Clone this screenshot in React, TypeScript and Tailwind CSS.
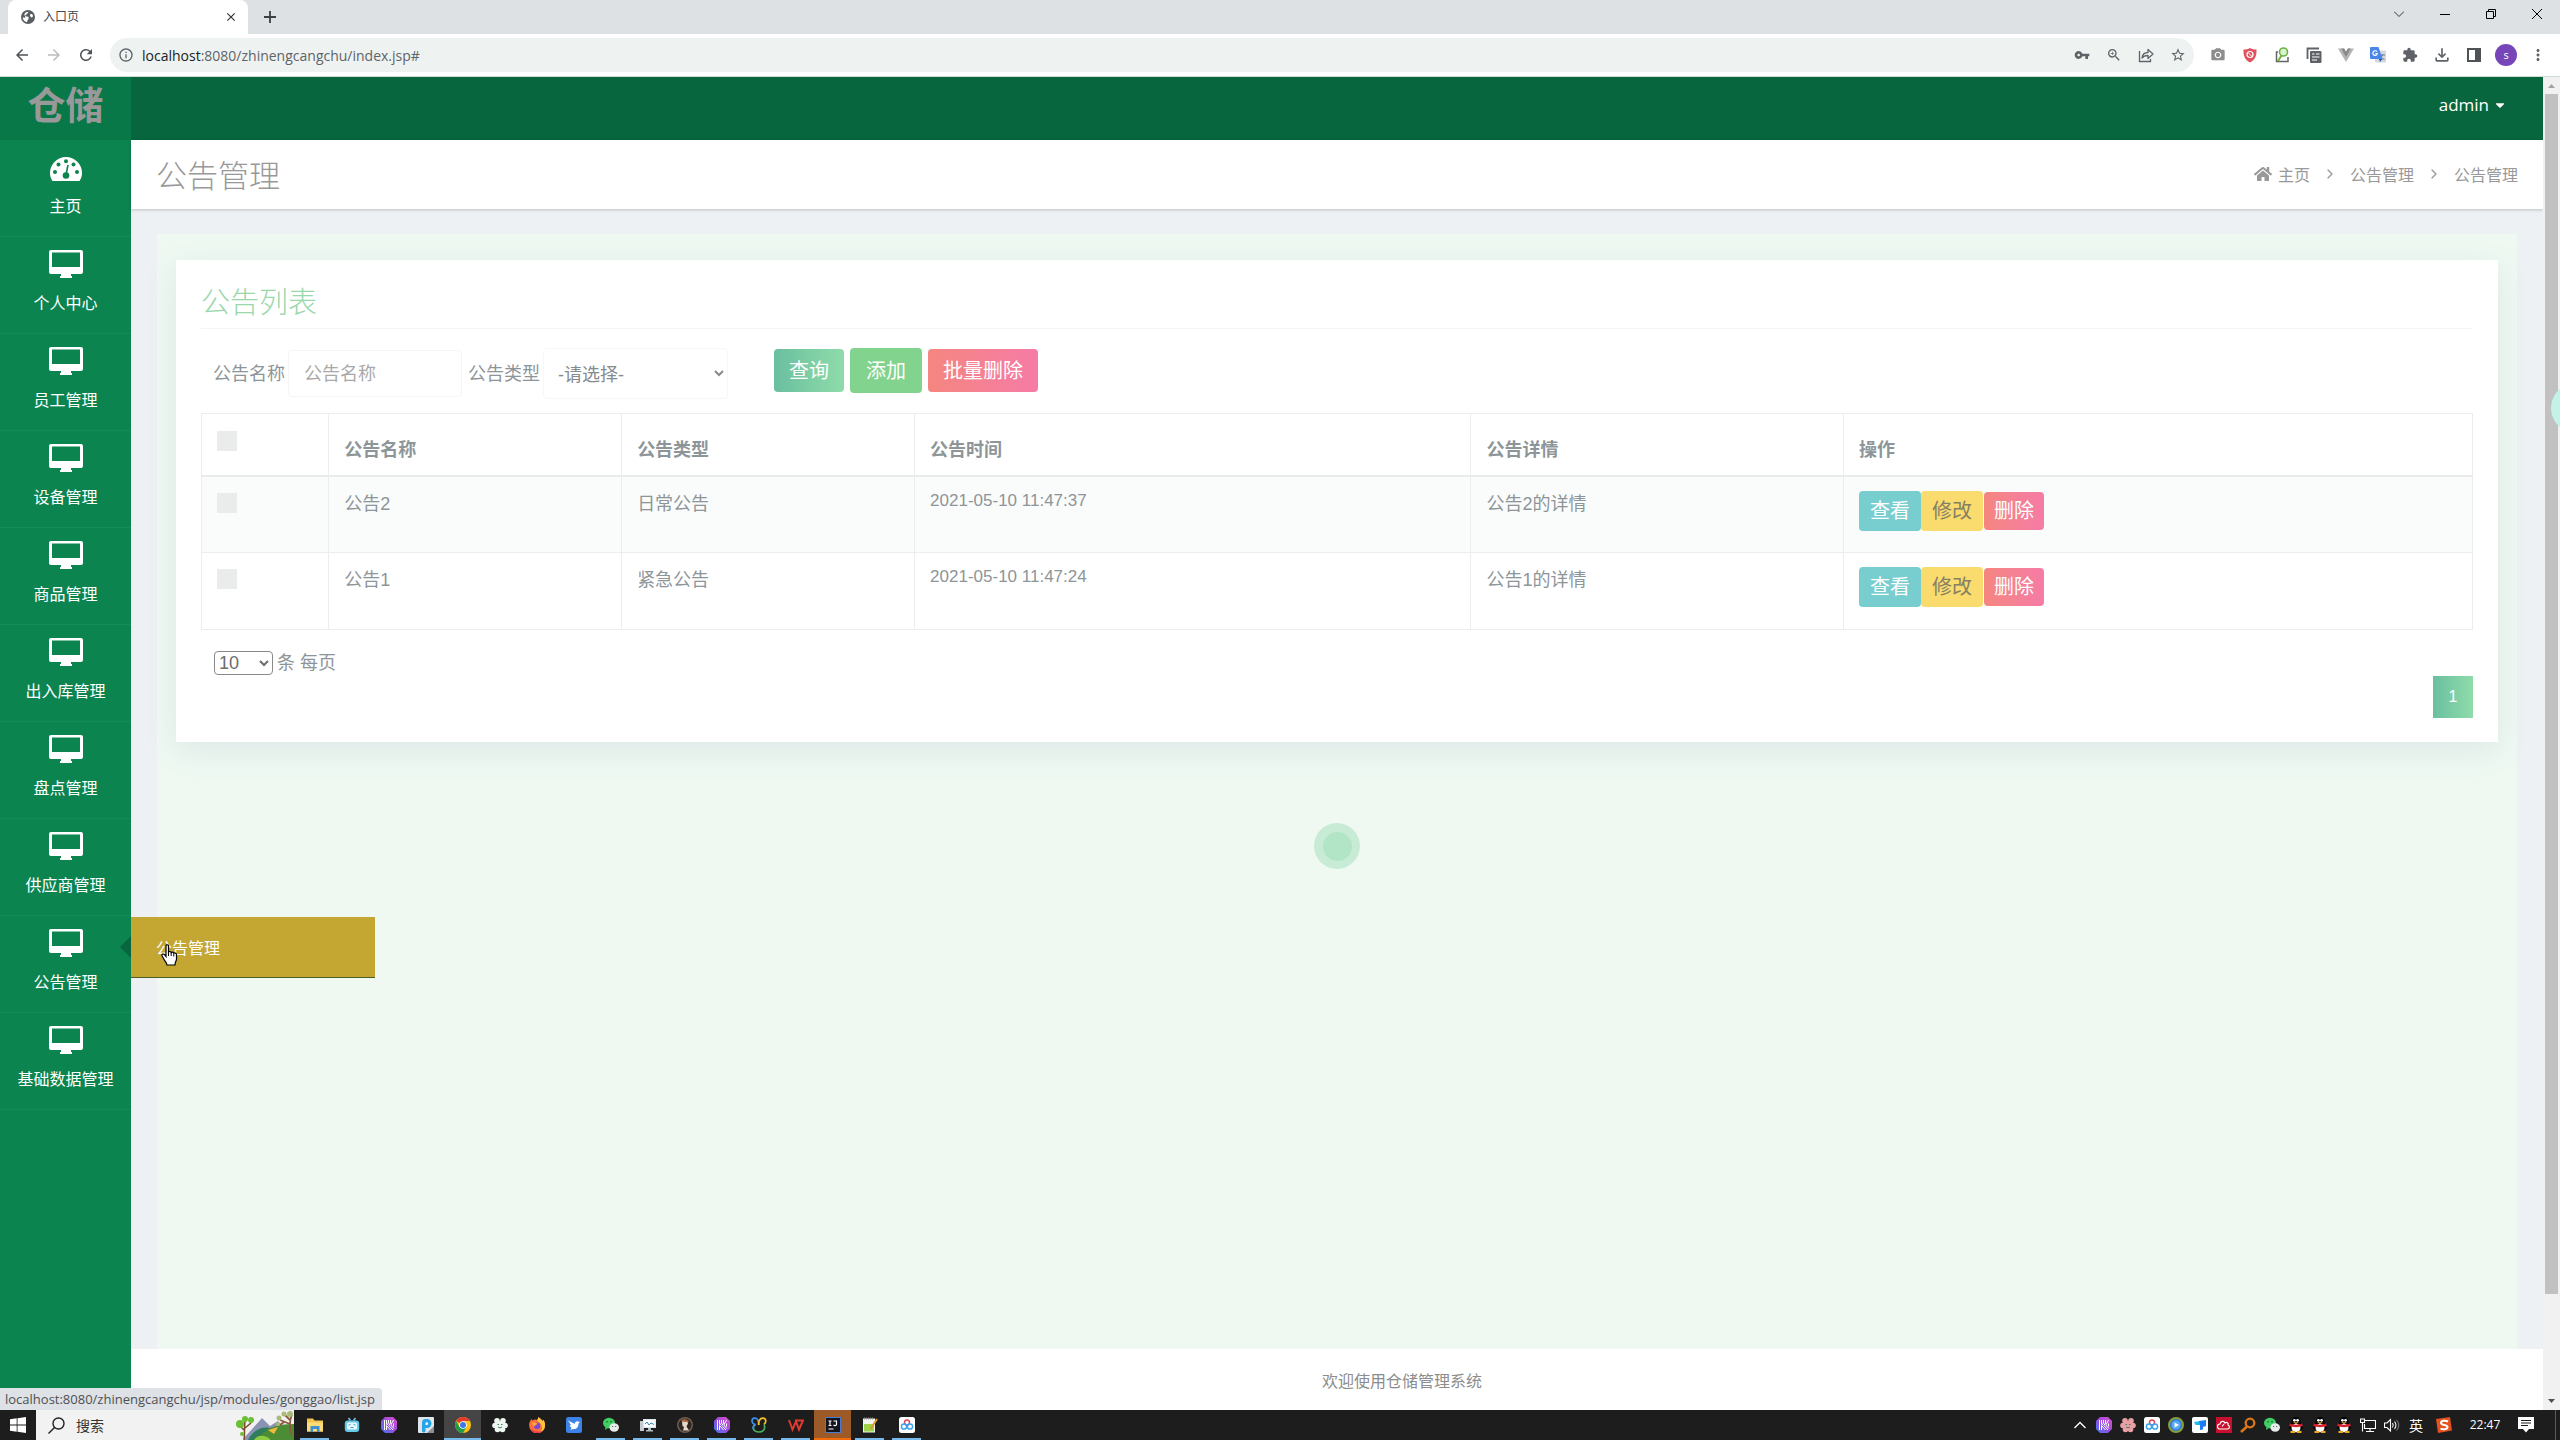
import type { ReactNode } from 'react'
import {
  MdArrowBack,
  MdArrowForward,
  MdCameraAlt,
  MdClose,
  MdExtension,
  MdInfoOutline,
  MdMoreVert,
  MdOutlineFileDownload,
  MdRefresh,
  MdStarBorder,
  MdVpnKey,
  MdZoomIn,
} from 'react-icons/md'
import { FaCaretDown, FaHome } from 'react-icons/fa'
import { ChevronRight } from 'lucide-react'

interface Notice {
  id: number
  name: string
  type: string
  time: string
  detail: string
}

const menuItems = [
  '个人中心',
  '员工管理',
  '设备管理',
  '商品管理',
  '出入库管理',
  '盘点管理',
  '供应商管理',
  '公告管理',
  '基础数据管理',
]

const notices: Notice[] = [
  { id: 2, name: '公告2', type: '日常公告', time: '2021-05-10 11:47:37', detail: '公告2的详情' },
  { id: 1, name: '公告1', type: '紧急公告', time: '2021-05-10 11:47:24', detail: '公告1的详情' },
]

/* ---------- icons ---------- */

function MonitorIcon() {
  return (
    <svg viewBox="0 0 34 28" className="w-[34px] h-7" fill="currentColor">
      <path
        fillRule="evenodd"
        d="M2 0h30a2 2 0 0 1 2 2v20a2 2 0 0 1-2 2H22v2h1v2H11v-2h1v-2H2a2 2 0 0 1-2-2V2a2 2 0 0 1 2-2zm1 2.500v14.500h28V2.500z"
      />
    </svg>
  )
}

function DashboardIcon() {
  return (
    <svg viewBox="0 0 32 24" className="w-8 h-6">
      <path d="M2.500 24C.8 21.500 0 19 0 16a16 16 0 0 1 32 0c0 3-.8 5.500-2.500 8z" fill="#fff" />
      <g fill="#0b8450">
        <circle cx="5" cy="15" r="2" />
        <circle cx="8.500" cy="7.500" r="2" />
        <circle cx="16" cy="4.300" r="2" />
        <circle cx="23.500" cy="7.500" r="2" />
        <circle cx="27" cy="15" r="2" />
        <circle cx="16" cy="18.500" r="3.300" />
      </g>
      <path d="M16 18l2-10" stroke="#0b8450" strokeWidth="1.600" />
    </svg>
  )
}

function GlobeIcon() {
  return (
    <svg viewBox="0 0 16 16" className="w-3.5 h-3.5">
      <circle cx="8" cy="8" r="8" fill="#5a5e62" />
      <path d="M9 2c-2 1-1 2.500-3 3S5 7.500 7 7.500s2.500 2 1 3.500-.5 2-1 3C3.500 13.500 2 11 2 8c2 1.500 3 1 3 0S3.500 6 4 4.500 7 2 9 2zM10.500 5c1-.5 2.500-.5 3 1s-.5 3-1.500 2.500-2.500-3-1.500-3.500z" fill="#fff" />
    </svg>
  )
}

function ShareIcon() {
  return (
    <svg viewBox="0 0 16 16" className="w-4 h-4" fill="none" stroke="#5f6368" strokeWidth="1.300">
      <path d="M1.500 4v10.500h11V12" />
      <path d="M4 11c.5-4 3-5.500 6-5.500V2.500L15 7l-5 4.500v-3C7.500 8.500 5.500 9 4 11z" strokeLinejoin="round" />
    </svg>
  )
}

function ShieldIcon() {
  return (
    <svg viewBox="0 0 16 16" className="w-4 h-4">
      <path d="M8 1c2 1 4 1.500 6.500 1.500C14.800 9 13 13 8 15.500 3 13 1.200 9 1.500 2.500 4 2.500 6 2 8 1z" fill="#e0525f" />
      <circle cx="8" cy="7.500" r="3" fill="none" stroke="#fff" strokeWidth="1.200" />
      <path d="M6 5.500l4 4" stroke="#fff" />
    </svg>
  )
}

function BookSearchIcon() {
  return (
    <svg viewBox="0 0 16 16" className="w-4 h-4" fill="none">
      <path d="M4 5H2.500v9.500H14V10" stroke="#666" strokeWidth="1.500" />
      <circle cx="9.500" cy="5" r="4" fill="#d8f5d0" stroke="#6cb33f" strokeWidth="1.600" />
      <path d="M7.500 8.500L4 14" stroke="#6cb33f" strokeWidth="2" />
    </svg>
  )
}

function CopyPageIcon() {
  return (
    <svg viewBox="0 0 16 16" className="w-4 h-4" fill="none">
      <path d="M1.500 12V1.500H13" stroke="#5f6368" strokeWidth="1.800" />
      <rect x="4" y="4" width="11.500" height="12" rx="1" fill="#5f6368" />
      <path d="M6 7h2.500M6 10h7.500M6 13h5M10 7h3.500" stroke="#fff" strokeWidth="1.200" />
    </svg>
  )
}

function VueIcon() {
  return (
    <svg viewBox="0 0 16 16" className="w-4 h-4">
      <path d="M0 1.500h6L8 5l2-3.500h6L8 15z" fill="#b5b5b5" />
      <path d="M3.200 1.500h3L8 4.800l1.800-3.300h3L8 10z" fill="#8a8a8a" />
    </svg>
  )
}

function TranslateIcon() {
  return (
    <svg viewBox="0 0 16 16" className="w-4 h-4">
      <rect x="5" y="3.500" width="11" height="12" rx="1" fill="#d5d8dc" />
      <path d="M9.500 8h5.500M12.200 7v1c-.4 2-1.400 3.500-3 4.500M10.500 9c.8 1.700 2 2.800 4 3.500" stroke="#5f7f95" fill="none" />
      <path d="M1 0h7.500l4 12H1a1 1 0 0 1-1-1V1a1 1 0 0 1 1-1z" fill="#4a86e8" />
      <path d="M7 4.700A2.300 2.300 0 1 0 7.400 6.500H5.300" stroke="#fff" strokeWidth="1.200" fill="none" />
      <path d="M9 12h3.500L10 15z" fill="#2a56b8" />
    </svg>
  )
}

function CursorHand() {
  return (
    <svg viewBox="0 0 17 22" className="w-[17px] h-[22px]">
      <path
        d="M5 1.500c0-1 2.500-1 2.500 0V8c.5-.8 2.500-.6 2.700.5.600-.7 2.300-.5 2.500.700.700-.5 2.800-.2 2.800 1.300v4.500c0 2-1.500 3-1.500 6H6c0-2-2.500-4-3.500-6.500L1 11.500c-.5-1.500 1.500-2 2.500-.8L5 12.500z"
        fill="#fff"
        stroke="#000"
        strokeWidth="1.200"
      />
      <path d="M7.500 8v4M10.200 9v3M12.800 10v2.500" stroke="#000" />
    </svg>
  )
}

function WindowsIcon() {
  return (
    <svg viewBox="0 0 16 16" className="w-4 h-4" fill="#fff">
      <path d="M0 2.200l6.700-.9v6.300H0zM7.500 1.200L16 0v7.600H7.500zM0 8.400h6.700v6.300L0 13.800zM7.500 8.400H16V16l-8.500-1.200z" />
    </svg>
  )
}

function FolderIcon() {
  return (
    <svg viewBox="0 0 16 16" className="w-4 h-4">
      <path d="M0 1.500h6l1.500 2H16v11H0z" fill="#f4c64e" />
      <path d="M0 5.500h16v9H0z" fill="#fbdc79" />
      <path d="M3.500 9h9v6H10v-3H6v3H3.500z" fill="#3f8fd4" />
    </svg>
  )
}

function BiliIcon() {
  return (
    <svg viewBox="0 0 16 16" className="w-4 h-4">
      <path d="M4.500 1l2 2.500M11.500 1l-2 2.500" stroke="#68c8e8" strokeWidth="1.600" />
      <rect x="0.800" y="3.500" width="14.400" height="11.500" rx="3" fill="#68c8e8" />
      <rect x="3" y="5.500" width="10" height="7" rx="1.500" fill="#e6f9ff" />
      <path d="M4.500 8l2-.6M11.500 8l-2-.6M6.500 10.500h3" stroke="#3ba7cc" />
    </svg>
  )
}

function MazeIcon() {
  return (
    <svg viewBox="0 0 16 16" className="w-4 h-4">
      <defs>
        <linearGradient id="maze" x1="0" y1="1" x2="1" y2="0">
          <stop offset="0" stopColor="#3f7df0" />
          <stop offset=".5" stopColor="#9b4be0" />
          <stop offset="1" stopColor="#e052c8" />
        </linearGradient>
      </defs>
      <path d="M4 0h8l4 4v8l-4 4H4l-4-4V4z" fill="url(#maze)" />
      <path d="M3.500 3v10M5.500 3v4.500M5.500 9v4M7.500 3v3L5.500 8.500l4 4.500M9.500 3v3L7.800 8.500 12 13M12.500 3L9.800 8l3 3.500M12.500 6.500v3" stroke="#fff" fill="none" />
    </svg>
  )
}

function PixPinIcon() {
  return (
    <svg viewBox="0 0 16 16" className="w-4 h-4">
      <rect width="16" height="16" rx="1" fill="#dfe5ea" />
      <path d="M4 14V5.500A3.500 3.500 0 0 1 7.500 2H9a4 4 0 0 1 0 9H7.500v2.500A1.500 1.500 0 0 1 4 14z" fill="#28a5e8" />
      <path d="M7.500 8V6.500a1.300 1.300 0 1 1 1.500 1.400z" fill="#fff" />
      <path d="M16 9v7H9z" fill="#8b8f96" />
    </svg>
  )
}

function ChromeIcon() {
  return (
    <svg viewBox="0 0 16 16" className="w-4 h-4">
      <circle cx="8" cy="8" r="8" fill="#fbc116" />
      <path d="M8 8L1.100 4A8 8 0 0 1 14.900 4H8z" fill="#e33b2e" />
      <path d="M1.100 4A8 8 0 0 0 8 16l3.500-6L8 8 4.500 10z" fill="#229a4d" />
      <circle cx="8" cy="8" r="3.800" fill="#fff" />
      <circle cx="8" cy="8" r="3" fill="#3b78e7" />
    </svg>
  )
}

function FlowerIcon({ color }: { color: string }) {
  return (
    <svg viewBox="0 0 16 16" className="w-4 h-4" fill={color}>
      <circle cx="5" cy="3.800" r="2.800" />
      <circle cx="11" cy="3.800" r="2.800" />
      <circle cx="3" cy="8.500" r="2.800" />
      <circle cx="13" cy="8.500" r="2.800" />
      <circle cx="5.500" cy="12.500" r="2.800" />
      <circle cx="10.500" cy="12.500" r="2.800" />
      <circle cx="8" cy="8" r="4" />
      <path d="M5.500 7.500h1.500M9 7.500h1.500M6 10c1.500 1 2.500 1 4 0" stroke="#3d7f6b" fill="none" />
    </svg>
  )
}

function FirefoxIcon() {
  return (
    <svg viewBox="0 0 16 16" className="w-4 h-4">
      <path d="M1 4.500L2.500 2l1 1.500C5 2.500 7 2 8 3c1-.5 1-2 1.500-3 1 1.500 3 2 4 4 .8-.5.8-1 .7-1.500C16 5 16 7 16 8.500a7.800 7.800 0 0 1-15.800 0C0 7 .3 5.500 1 4.500z" fill="#ff7139" />
      <path d="M9.500 0c1 1.500 3 2 4 4 .8-.5.8-1 .7-1.500C16 5 16 7 16 8.500c0 3-2 5.500-4 6.500 1.500-3 1.500-6-.5-8.500C10 5 8.500 4.500 8 3c1-.5 1-2 1.500-3z" fill="#ffc53a" />
      <path d="M1 11c1.500 3.500 4 5 7.500 5 2 0 3.500-.8 4.500-2-4 1.500-9 .5-12-3z" fill="#e8305a" />
      <circle cx="8" cy="8.700" r="3.300" fill="#7b49d8" />
      <path d="M3.500 5.500C5 5 6.500 5.500 8.500 6.500 8 8 6 7.800 5.500 9.500 4 9 3.300 7 3.500 5.500z" fill="#ffa436" />
    </svg>
  )
}

function BirdIcon() {
  return (
    <svg viewBox="0 0 16 16" className="w-4 h-4">
      <rect width="16" height="16" rx="2.500" fill="#3c82e8" />
      <path d="M2 3.500l5 2.500 1.500 1c.5-2 2-3 3.500-2.500l2 .5-1.500 1.500c0 4-2.500 6-5.500 5.500L4.500 13l1-2-2-2.500L5 8z" fill="#fff" />
    </svg>
  )
}

function MonitorChartIcon() {
  return (
    <svg viewBox="0 0 16 16" className="w-4 h-4">
      <rect x="0" y="4" width="4" height="10" fill="#c3cbd1" />
      <rect x="3" y="2" width="13" height="9" fill="#dfe7ec" />
      <rect x="4.200" y="3.200" width="10.600" height="6.600" fill="#fff" />
      <path d="M5 7l2-2 2 3 2-2 3 1.500" stroke="#2a88b8" fill="none" />
      <path d="M8 11h3v2h2v1.500H6V13h2z" fill="#b3bdc4" />
    </svg>
  )
}

function PortraitIcon() {
  return (
    <svg viewBox="0 0 16 16" className="w-4 h-4">
      <circle cx="8" cy="8" r="8" fill="#6f5d50" />
      <circle cx="8" cy="8" r="6.500" fill="#2d2622" />
      <path d="M5 4.500c2-2 6-1 6 2l-1.500 3 2.500 4H6l1-3.500-1.500-1z" fill="#e5d8cb" />
      <path d="M4 4c2-3 7-2 8 1L7 5z" fill="#b06b43" />
    </svg>
  )
}

function NavicatIcon() {
  return (
    <svg viewBox="0 0 16 16" className="w-4 h-4" fill="none" strokeWidth="1.700">
      <path d="M4.500 7.500C0 7 .2 1.500 3.500 1.200 6.500 1 8 4 7.800 8" stroke="#3f8fe8" />
      <path d="M7.800 8C7 4.500 9 1 12 1.200c3.500.300 3.500 4 1 6.300" stroke="#f2c02b" />
      <path d="M4.500 7.500C1 9 1.500 15 8 15c4 0 7-3 5-7.500" stroke="#46b05a" />
      <path d="M4.500 7.500C2.500 8.500 1.800 10.500 2.500 12.500" stroke="#3f8fe8" />
    </svg>
  )
}

function WpsIcon() {
  return (
    <svg viewBox="0 0 16 16" className="w-4 h-4">
      <path d="M1 3l3.500 9.500L8 4.500l3 8L15 3.500H7" fill="none" stroke="#e03a2e" strokeWidth="2" />
    </svg>
  )
}

function IdeaIcon() {
  return (
    <svg viewBox="0 0 16 16" className="w-4 h-4">
      <rect width="16" height="16" fill="#4a7bd0" />
      <rect x="1" y="1" width="14" height="14" fill="#14141c" />
      <path d="M3.500 4h3M5 4v4.500M3.500 8.500h3M8.500 4h3v3.500c0 1.200-2 1.400-3 .5M3.500 12h5" stroke="#fff" strokeWidth="1.200" fill="none" />
    </svg>
  )
}

function NotepadIcon() {
  return (
    <svg viewBox="0 0 16 16" className="w-4 h-4">
      <rect x="1" y="1.500" width="12" height="14" fill="#f5f7ee" />
      <rect x="2" y="7" width="10" height="7.500" fill="#9fd34a" />
      <path d="M2 1.500h10" stroke="#8d8d8d" strokeWidth="2" strokeDasharray="1 1" />
      <path d="M15 2L8.500 12" stroke="#e09a2c" strokeWidth="2" />
    </svg>
  )
}

function NetdiskIcon() {
  return (
    <svg viewBox="0 0 16 16" className="w-4 h-4">
      <rect width="16" height="16" rx="2.500" fill="#fff" />
      <g fill="none" strokeWidth="1.500">
        <circle cx="8" cy="5.500" r="2.500" stroke="#e34a5c" />
        <circle cx="5" cy="9.500" r="2.600" stroke="#3ba4f0" />
        <circle cx="11" cy="9.500" r="2.600" stroke="#3ba4f0" />
      </g>
    </svg>
  )
}

function PlayerIcon() {
  return (
    <svg viewBox="0 0 16 16" className="w-4 h-4">
      <circle cx="8" cy="8" r="7" fill="#2b7de0" stroke="#8a9d38" strokeWidth="2" />
      <circle cx="8" cy="8" r="4.500" fill="#5aa8f2" />
      <path d="M6.500 5.500L11 8l-4.500 2.500z" fill="#fff" />
    </svg>
  )
}

function ToDeskIcon() {
  return (
    <svg viewBox="0 0 16 16" className="w-4 h-4">
      <rect width="16" height="16" rx="2" fill="#fff" />
      <path d="M2 5l6-1v4H3.500z" fill="#1ec0e8" />
      <path d="M7 4l7-1v6l-3 1v2.500l-3 .5V8z" fill="#1f7cf0" />
    </svg>
  )
}

function CloudIcon() {
  return (
    <svg viewBox="0 0 16 16" className="w-4 h-4">
      <rect width="16" height="16" fill="#c8102e" />
      <path d="M4 12a2.500 2.500 0 0 1 0-5c.3-3 4-3.500 5-1 1.500-1.500 4 0 3 2 2.500 1 1.500 4-.5 4zM6 9.500L8 7" fill="none" stroke="#fff" strokeWidth="1.200" />
    </svg>
  )
}

function MagnifierIcon() {
  return (
    <svg viewBox="0 0 16 16" className="w-4 h-4" fill="none" stroke="#dd7716">
      <circle cx="10" cy="6" r="4.300" strokeWidth="2.300" />
      <path d="M7 9.500L1 15" strokeWidth="2.600" />
    </svg>
  )
}

function PenguinIcon() {
  return (
    <svg viewBox="0 0 16 16" className="w-4 h-4">
      <path d="M8 0c3 0 4.500 2 4.500 5.500 1.500 2 3 5 2 6.500L12 13H4l-2.500-1c-1-1.500.5-4.500 2-6.500C3.500 2 5 0 8 0z" fill="#050505" />
      <ellipse cx="8" cy="11" rx="4.500" ry="4.200" fill="#fff" />
      <path d="M2 6.500c3 1.500 9 1.500 12 0l.8 2.500c-3.800 1.500-9.800 1.500-13.600 0z" fill="#d8232f" />
      <circle cx="6.400" cy="3.300" r="1.400" fill="#fff" />
      <circle cx="9.600" cy="3.300" r="1.400" fill="#fff" />
      <path d="M5 5.300h6L8 7zM2.500 14h4.500v2H2.500zM9 14h4.500v2H9z" fill="#f0a722" />
    </svg>
  )
}

function SogouIcon() {
  return (
    <svg viewBox="0 0 16 16" className="w-4 h-4">
      <path d="M0 2L14 0l2 13.500L2 16z" fill="#e4511f" />
      <path d="M12 4.500C9 3 5 3.500 5 6s6.500 1.500 6.500 4-4.500 3-7 1.500" stroke="#fff" strokeWidth="2" fill="none" />
    </svg>
  )
}

function WechatIcon() {
  return (
    <svg viewBox="0 0 16 16" className="w-4 h-4">
      <ellipse cx="6" cy="6" rx="6" ry="5.200" fill="#3fcf62" />
      <path d="M2.500 10l-.5 3 3-2z" fill="#3fcf62" />
      <ellipse cx="11.200" cy="10.500" rx="4.800" ry="4.200" fill="#e8ecea" />
      <g fill="#1d5c30">
        <circle cx="4" cy="4.800" r=".8" />
        <circle cx="8" cy="4.800" r=".8" />
        <circle cx="9.700" cy="9.500" r=".6" />
        <circle cx="12.700" cy="9.500" r=".6" />
      </g>
    </svg>
  )
}

function NetworkIcon() {
  return (
    <svg viewBox="0 0 16 16" className="w-4 h-4" fill="none" stroke="#fff" strokeWidth="1.100">
      <path d="M5 3.500h10.500v8H4.500V7M10 11.500V14M6 14.500h8" />
      <path d="M.5 2h4v3.500h-4zM2.500 5.500v9" />
    </svg>
  )
}

function SpeakerIcon() {
  return (
    <svg viewBox="0 0 16 16" className="w-4 h-4" fill="none" stroke="#fff" strokeWidth="1.100">
      <path d="M.5 6v4.500H3L6.500 14V2.500L3 6z" />
      <path d="M8.500 6q1.500 2.200 0 4.500M10.500 4.500q3 3.700 0 7.500" />
      <path d="M12.500 3q4.500 5.200 0 10.500" stroke="#777" />
    </svg>
  )
}

function SearchArt() {
  return (
    <svg viewBox="0 0 58 30" className="w-[58px] h-[30px]">
      <path d="M8 28L26 8l8 8 8-5 16 17v2H8z" fill="#8b93b5" />
      <path d="M12 30c4-8 12-14 22-12s18 4 24 12z" fill="#2f7d5a" />
      <path d="M22 30c6-12 18-16 36-16v16z" fill="#4c8c35" />
      <path d="M18 30c3-5 10-6 16-1v1z" fill="#8ecb3f" />
      <path d="M32 20l10-3-4 7z" fill="#f0b93a" />
      <path d="M8 30c1-6 0-12 1-19M9 18l6-5M8 20l-4-4" stroke="#7a4a28" strokeWidth="1.500" fill="none" />
      <g fill="#6bbf35">
        <circle cx="4" cy="14" r="4" />
        <circle cx="9" cy="9" r="3" />
        <circle cx="15" cy="10" r="3" />
        <circle cx="6" cy="24" r="2" />
      </g>
      <path d="M56 26c-3-8-3-14 0-22M54 14l-10-4M54 10l-6-6M48 12l-4 3" stroke="#8d5a3c" strokeWidth="1.800" fill="none" />
      <g fill="#a9bb78">
        <circle cx="43" cy="8" r="2.500" />
        <circle cx="48" cy="4" r="2.500" />
        <circle cx="54" cy="4" r="3" />
        <circle cx="42" cy="14" r="2" />
      </g>
    </svg>
  )
}

/* ---------- browser chrome ---------- */

function ToolbarButton({ label, children }: { label: string; children: ReactNode }) {
  return (
    <button aria-label={label} className="w-8 h-8 flex items-center justify-center text-base text-[#5f6368]">
      {children}
    </button>
  )
}

function BrowserChrome() {
  return (
    <div className="shrink-0 font-['Open_Sans','Noto_Sans_CJK_SC',sans-serif]">
      <div className="h-[34px] bg-[#dee1e4] flex items-center pl-2">
        <div className="w-60 h-full bg-white rounded-t-lg flex items-center pl-[13px] pr-2.5">
          <GlobeIcon />
          <span className="ml-2 text-xs text-[#45484c] grow">入口页</span>
          <button aria-label="关闭标签页" className="text-sm text-[#333]">
            <MdClose />
          </button>
        </div>
        <button aria-label="新标签页" className="ml-[15px]">
          <svg viewBox="0 0 14 14" className="w-3.5 h-3.5" stroke="#3c4043" strokeWidth="1.800">
            <path d="M7 1v12M1 7h12" />
          </svg>
        </button>
        <div className="ml-auto flex h-7 self-start">
          <button aria-label="标签搜索" className="w-[46px] flex items-center justify-center">
            <svg viewBox="0 0 10 10" className="w-2.5 h-2.5" fill="none" stroke="#333">
              <path d="M0 2.500l5 5 5-5" />
            </svg>
          </button>
          <button aria-label="最小化" className="w-[46px] flex items-center justify-center">
            <svg viewBox="0 0 10 10" className="w-2.5 h-2.5" stroke="#000">
              <path d="M0 5.500h10" />
            </svg>
          </button>
          <button aria-label="还原" className="w-[46px] flex items-center justify-center">
            <svg viewBox="0 0 10 10" className="w-2.5 h-2.5" fill="none" stroke="#000">
              <path d="M.5 2.500h7v7h-7zM2.500 2.500v-2h7v7h-2" />
            </svg>
          </button>
          <button aria-label="关闭" className="w-[46px] flex items-center justify-center">
            <svg viewBox="0 0 10 10" className="w-2.5 h-2.5" stroke="#000">
              <path d="M0 0l10 10M10 0L0 10" />
            </svg>
          </button>
        </div>
      </div>
      <div className="h-[43px] bg-white border-b border-[#cfdcd5] flex items-center pl-1.5 pr-1.5">
        <div className="flex text-lg text-[#4f5357]">
          <button aria-label="后退" className="w-8 flex justify-center">
            <MdArrowBack />
          </button>
          <button aria-label="前进" className="w-8 flex justify-center text-[#babcbe]">
            <MdArrowForward />
          </button>
          <button aria-label="刷新" className="w-8 flex justify-center">
            <MdRefresh />
          </button>
        </div>
        <div className="ml-2 h-[34px] grow bg-[#eef3f2] rounded-full flex items-center pl-2">
          <MdInfoOutline className="text-base text-[#5f6368]" />
          <span className="ml-2 text-[14px] text-[#5f6368] grow">
            <span className="text-[#202124]">localhost</span>:8080/zhinengcangchu/index.jsp#
          </span>
          <ToolbarButton label="密码"><MdVpnKey /></ToolbarButton>
          <ToolbarButton label="缩放"><MdZoomIn /></ToolbarButton>
          <ToolbarButton label="分享"><ShareIcon /></ToolbarButton>
          <ToolbarButton label="收藏"><MdStarBorder /></ToolbarButton>
        </div>
        <div className="flex ml-2">
          <ToolbarButton label="截图"><MdCameraAlt className="text-[#8d8d8d]" /></ToolbarButton>
          <ToolbarButton label="拦截"><ShieldIcon /></ToolbarButton>
          <ToolbarButton label="查词"><BookSearchIcon /></ToolbarButton>
          <ToolbarButton label="复制"><CopyPageIcon /></ToolbarButton>
          <ToolbarButton label="Vue"><VueIcon /></ToolbarButton>
          <ToolbarButton label="翻译"><TranslateIcon /></ToolbarButton>
          <ToolbarButton label="扩展程序"><MdExtension /></ToolbarButton>
          <ToolbarButton label="下载"><MdOutlineFileDownload className="text-xl" /></ToolbarButton>
          <ToolbarButton label="侧边栏">
            <svg viewBox="0 0 14 14" className="w-3.5 h-3.5">
              <path d="M1 1h12v12H1z" fill="none" stroke="#4f5357" strokeWidth="2" />
              <path d="M8 1h5v12H8z" fill="#4f5357" />
            </svg>
          </ToolbarButton>
          <ToolbarButton label="用户">
            <span className="w-[22px] h-[22px] rounded-full bg-[#7646b8] text-white text-[11px] leading-[22px]">s</span>
          </ToolbarButton>
          <ToolbarButton label="更多"><MdMoreVert className="text-lg" /></ToolbarButton>
        </div>
      </div>
    </div>
  )
}

/* ---------- page ---------- */

function Sidebar() {
  return (
    <nav className="w-[131px] shrink-0 bg-[#0b8450] text-white text-base leading-6">
      <a href="#" className="h-[97px] pt-[17px] flex flex-col items-center border-b border-[#128d58]">
        <DashboardIcon />
        <span className="mt-3">主页</span>
      </a>
      {menuItems.map(item => (
        <div key={item} className="relative">
          <a href="#" className="h-[97px] pt-[13px] flex flex-col items-center border-b border-[#128d58]">
            <MonitorIcon />
            <span className="mt-3">{item}</span>
          </a>
          {item === '公告管理' && (
            <>
              <span className="absolute right-0 top-5 w-0 h-0 border-y-[11px] border-y-transparent border-r-[11px] border-r-[#08663e]" />
              <a
                href="#"
                className="absolute z-10 left-full top-px w-[244px] h-[61px] px-[25px] flex items-center bg-[#c4a633] border-b border-[#4a5f25]"
              >
                公告管理
              </a>
              <span className="absolute z-20 left-[161px] top-7">
                <CursorHand />
              </span>
            </>
          )}
        </div>
      ))}
    </nav>
  )
}

function FilterBar() {
  return (
    <form className="mt-[19px] pl-3 flex items-center text-lg text-[#8d9599]">
      <label htmlFor="name">公告名称</label>
      <input
        id="name"
        type="text"
        placeholder="公告名称"
        className="ml-[3px] w-[174px] h-[47px] px-[15px] pt-0.5 border border-[#f3f5f6] rounded-sm placeholder-[#a9a9a9]"
      />
      <label htmlFor="type" className="ml-1.5">公告类型</label>
      <select id="type" className="ml-[3px] w-[185px] h-[51px] px-2.5 pt-0.5 bg-white border border-[#f6f8f8] rounded-sm text-[#858b8f]">
        <option>-请选择-</option>
      </select>
      <div className="ml-[46px] self-start flex items-center gap-1.5 text-xl text-white">
        <button type="button" className="h-[43px] px-[15px] rounded bg-linear-to-r from-[#6abf9f] to-[#8fdcaa]">查询</button>
        <button type="button" className="h-[45px] px-4 rounded bg-[#82d38d]">添加</button>
        <button type="button" className="h-[43px] px-[15px] rounded bg-linear-to-r from-[#f4867f] to-[#f67ba6]">批量删除</button>
      </div>
    </form>
  )
}

function NoticeTable() {
  const cell = 'p-[15px] pt-3.5 border border-[#ecedee] align-top'
  const head = 'px-[15px] pt-[15px] pb-3 h-[62px] border border-[#ecedee] border-b-2 border-b-[#e9ebeb] align-bottom text-left'
  return (
    <table className="mt-[14px] w-full table-fixed border-collapse text-lg leading-[26px] text-[#8d9599]">
      <colgroup>
        <col className="w-[5.6%]" />
        <col className="w-[12.9%]" />
        <col className="w-[12.9%]" />
        <col className="w-[24.5%]" />
        <col className="w-[16.4%]" />
        <col className="w-[27.7%]" />
      </colgroup>
      <thead>
        <tr>
          <th className={`${head} align-top`}>
            <input type="checkbox" aria-label="全选" className="block mt-0.5 w-5 h-5 appearance-none bg-[#eaecec]" />
          </th>
          <th className={head}>公告名称</th>
          <th className={head}>公告类型</th>
          <th className={head}>公告时间</th>
          <th className={head}>公告详情</th>
          <th className={head}>操作</th>
        </tr>
      </thead>
      <tbody>
        {notices.map(notice => (
          <tr key={notice.id} className="h-[77px] odd:bg-[#fafbfb]">
            <td className={cell}>
              <input type="checkbox" aria-label={notice.name} className="block mt-0.5 w-5 h-5 appearance-none bg-[#eaecec]" />
            </td>
            <td className={cell}>{notice.name}</td>
            <td className={cell}>{notice.type}</td>
            <td className={`${cell} text-[17px] leading-5`}>{notice.time}</td>
            <td className={cell}>{notice.detail}</td>
            <td className={cell}>
              <div className="flex items-center text-xl text-white">
                <button className="h-10 px-[11px] rounded bg-[#78cdcf]">查看</button>
                <button className="h-10 px-[11px] rounded bg-[#fadb6d] text-[#858063]">修改</button>
                <button className="ml-px h-[38px] px-2.5 rounded-sm bg-linear-to-r from-[#f4867f] to-[#f67ba6]">删除</button>
              </div>
            </td>
          </tr>
        ))}
      </tbody>
    </table>
  )
}

function Main() {
  return (
    <main className="grow min-w-0 flex flex-col bg-[#eef1f3]">
      <div className="h-[69px] shrink-0 bg-white shadow-[0_1px_3px_rgba(0,0,0,0.2)] px-[25px] pb-0.5 flex items-center justify-between text-[#999]">
        <h1 className="text-[31px] font-light leading-10">公告管理</h1>
        <div className="flex items-center text-base">
          <FaHome className="text-lg" />
          <a href="#" className="ml-1.5">主页</a>
          <ChevronRight className="mx-3 w-4 h-4" />
          <a href="#">公告管理</a>
          <ChevronRight className="mx-3 w-4 h-4" />
          <a href="#">公告管理</a>
        </div>
      </div>
      <div className="relative grow mt-[25px] mx-[26px] px-[19px] pt-[26px] bg-[#eff9f2]">
        <section className="bg-white px-[25px] pt-[26px] pb-6 shadow-[0_8px_30px_rgba(90,110,160,0.12)] font-['Liberation_Sans','Noto_Sans_CJK_SC',sans-serif]">
          <h2 className="text-[29px] leading-[34px] pb-2 border-b border-[#f3f4f4] font-light text-[#9ad7ab]">公告列表</h2>
          <FilterBar />
          <NoticeTable />
          <div className="mt-[21px] pl-[13px] flex items-center text-lg leading-6 text-[#8d9599]">
            <select aria-label="每页条数" className="w-[59px] h-6 border border-[#8a8a8a] rounded-sm text-[#6d6d6d]">
              <option>10</option>
            </select>
            <span className="ml-1">条 每页</span>
          </div>
          <div className="mt-px flex justify-end">
            <button className="w-10 h-[42px] bg-linear-to-r from-[#6abf9f] to-[#8fdcaa] text-white text-base">1</button>
          </div>
        </section>
        {/* loading indicator */}
        <div className="absolute left-1/2 top-[589px] -ml-[23px] w-[46px] h-[46px] rounded-full bg-[#c8ebd6] flex items-center justify-center">
          <div className="w-[29px] h-[29px] rounded-full bg-[#b2e5c5]" />
        </div>
      </div>
      <footer className="h-[61px] shrink-0 bg-white pl-[130px] flex items-center justify-center text-base text-[#8c8c8c]">
        欢迎使用仓储管理系统
      </footer>
    </main>
  )
}

function Scrollbar() {
  return (
    <div className="w-[17px] shrink-0 bg-[#f1f1f1] flex flex-col items-center">
      <svg viewBox="0 0 17 17" className="w-[17px] h-[17px] shrink-0" fill="#a3a3a3">
        <path d="M5 11l3.500-4 3.500 4z" />
      </svg>
      <div className="w-[13px] h-[90%] bg-[#c1c1c1]" />
      <svg viewBox="0 0 17 17" className="w-[17px] h-[17px] shrink-0 mt-auto" fill="#505050">
        <path d="M5 6l3.500 4L12 6z" />
      </svg>
    </div>
  )
}

/* ---------- taskbar ---------- */

const taskbarApps: { name: string; icon: ReactNode; state?: 'open' | 'active' | 'alert' }[] = [
  { name: '文件资源管理器', icon: <FolderIcon />, state: 'open' },
  { name: '哔哩哔哩', icon: <BiliIcon /> },
  { name: '录屏', icon: <MazeIcon /> },
  { name: '贴图', icon: <PixPinIcon /> },
  { name: '浏览器', icon: <ChromeIcon />, state: 'active' },
  { name: '助手', icon: <FlowerIcon color="#eef6f0" /> },
  { name: '火狐', icon: <FirefoxIcon /> },
  { name: '飞鸟', icon: <BirdIcon /> },
  { name: '微信', icon: <WechatIcon />, state: 'open' },
  { name: '监视器', icon: <MonitorChartIcon />, state: 'open' },
  { name: '头像', icon: <PortraitIcon />, state: 'open' },
  { name: '录屏窗口', icon: <MazeIcon />, state: 'open' },
  { name: '数据库', icon: <NavicatIcon />, state: 'open' },
  { name: '文档', icon: <WpsIcon />, state: 'open' },
  { name: '开发工具', icon: <IdeaIcon />, state: 'alert' },
  { name: '记事本', icon: <NotepadIcon />, state: 'open' },
  { name: '网盘', icon: <NetdiskIcon />, state: 'open' },
]

const trayIcons: ReactNode[] = [
  <MazeIcon />,
  <FlowerIcon color="#e8a0a4" />,
  <NetdiskIcon />,
  <PlayerIcon />,
  <ToDeskIcon />,
  <CloudIcon />,
  <MagnifierIcon />,
  <WechatIcon />,
  <PenguinIcon />,
  <PenguinIcon />,
  <PenguinIcon />,
  <NetworkIcon />,
  <SpeakerIcon />,
]

function Taskbar() {
  return (
    <div className="h-[30px] shrink-0 bg-[#1d1d1d] flex text-white">
      <button aria-label="开始" className="w-9 flex items-center justify-center">
        <WindowsIcon />
      </button>
      <div className="w-[258px] bg-[#f2f2f2] flex items-center">
        <svg viewBox="0 0 17 17" className="ml-3 w-[17px] h-[17px]" fill="none" stroke="#222" strokeWidth="1.400">
          <circle cx="10.500" cy="6.500" r="5.500" />
          <path d="M6.500 10.500L.5 16.500" />
        </svg>
        <input aria-label="搜索" placeholder="搜索" className="ml-[11px] w-0 grow text-sm placeholder-[#333]" />
        <SearchArt />
      </div>
      <div className="ml-0.5 flex">
        {taskbarApps.map(app => (
          <button
            key={app.name}
            aria-label={app.name}
            className={`relative w-[37px] flex items-center justify-center ${
              app.state === 'active' ? 'bg-[#454545]' : app.state === 'alert' ? 'bg-[#9c5a29]' : ''
            }`}
          >
            {app.icon}
            {app.state && (
              <span
                className={`absolute bottom-0 h-0.5 ${
                  app.state === 'alert' ? 'inset-x-0 bg-[#f26b0a]' : app.state === 'active' ? 'inset-x-0 bg-[#76b9ed]' : 'inset-x-1 bg-[#76b9ed]'
                }`}
              />
            )}
          </button>
        ))}
      </div>
      <div className="ml-auto flex items-center">
        <button aria-label="显示隐藏的图标" className="w-6 flex justify-center">
          <svg viewBox="0 0 12 8" className="w-3 h-2" fill="none" stroke="#fff" strokeWidth="1.300">
            <path d="M.5 7L6 1.500 11.500 7" />
          </svg>
        </button>
        {trayIcons.map((icon, i) => (
          <span key={i} className="w-6 flex justify-center">
            {icon}
          </span>
        ))}
        <span className="w-6 text-center text-sm">英</span>
        <span className="ml-0.5 w-7 flex justify-center">
          <SogouIcon />
        </span>
        <span className="ml-2.5 w-[34px] text-xs text-center font-['Open_Sans',sans-serif]">22:47</span>
        <button aria-label="通知" className="ml-4 w-[18px]">
          <svg viewBox="0 0 16 16" className="w-4 h-4">
            <path d="M0 0h16v12h-5l-3 3.500L5 12H0z" fill="#fff" />
            <path d="M3 3.500h10M3 6h10M3 8.500h7" stroke="#1d1d1d" />
          </svg>
        </button>
        <span className="ml-[19px] mr-1 w-px h-[30px] bg-[#5a5a5a]" />
      </div>
    </div>
  )
}

export default function App() {
  return (
    <div className="h-screen flex flex-col overflow-hidden bg-white font-['Noto_Sans_CJK_SC',sans-serif]">
      <BrowserChrome />
      <div className="relative grow min-h-0 flex">
        <div className="grow min-w-0 flex flex-col">
          <header className="h-[63px] shrink-0 flex items-center bg-[#08663e] text-white">
            <div className="w-[131px] h-full bg-[#097848] flex items-center justify-center pb-3 text-[38px] font-bold text-[#999]">
              仓储
            </div>
            <button className="ml-auto mr-9 pb-2 flex items-center gap-1 text-[17px] font-['Open_Sans',sans-serif]">
              admin <FaCaretDown className="text-sm" />
            </button>
          </header>
          <div className="grow flex">
            <Sidebar />
            <Main />
          </div>
        </div>
        <Scrollbar />
        {/* floating assistant tucked behind the window edge */}
        <div className="absolute right-0 top-[306px] w-[9px] h-[50px] overflow-hidden">
          <div className="w-[50px] h-[50px] rounded-full bg-[#c2f2e8]" />
        </div>
        {/* link target shown by the browser on hover */}
        <div className="absolute z-30 left-0 bottom-0 h-[22px] pl-[5px] pr-[7px] rounded-tr bg-[#dee1e5] text-[13px] leading-[22px] text-[#4d5053] font-['Open_Sans',sans-serif]">
          localhost:8080/zhinengcangchu/jsp/modules/gonggao/list.jsp
        </div>
      </div>
      <Taskbar />
    </div>
  )
}
